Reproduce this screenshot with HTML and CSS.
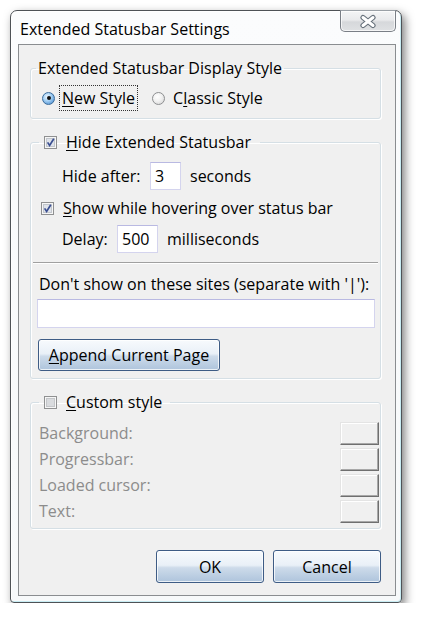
FILE: index.html
```html
<!DOCTYPE html>
<html>
<head>
<meta charset="utf-8">
<link rel="stylesheet" href="styles.css">
</head>
<body>
<div class="window">
  <div class="titlebar">
    <div class="title">Extended Statusbar Settings</div>
    <div class="close">
      <svg width="18" height="15" viewBox="0 0 18 15"><path d="M4 3.5 L14 11.5 M14 3.5 L4 11.5" stroke="#66707a" stroke-width="5.2" stroke-linecap="round" fill="none"/><path d="M4 3.5 L14 11.5 M14 3.5 L4 11.5" stroke="#ffffff" stroke-width="3" stroke-linecap="round" fill="none"/></svg>
    </div>
  </div>
  <div class="client">
    <fieldset class="group g1">
      <legend class="legend">Extended Statusbar Display Style</legend>
      <div class="radio-row">
        <span class="radio on"></span>
        <span class="focus"><u>N</u>ew Style</span>
        <span class="radio off second"></span>
        <span class="rlabel">C<u>l</u>assic Style</span>
      </div>
    </fieldset>

    <fieldset class="group g2">
      <legend class="legend cblegend">
        <svg class="cb" width="13" height="13" viewBox="0 0 13 13"><rect x="0.5" y="0.5" width="12" height="12" fill="#f6f6f6" stroke="#8f9091"/><rect x="2.5" y="2.5" width="8" height="8" fill="#dfe3ea" stroke="#c2c6cc"/><path d="M3.6 6.4 L5.6 9.4 L9.8 2.8" fill="none" stroke="#3b4f91" stroke-width="1.7"/></svg>
        <span><u>H</u>ide Extended Statusbar</span>
      </legend>
      <div class="field-row hide-row">
        <span class="flabel w-hide">Hide after:</span>
        <span class="textbox tb-hide">3</span>
        <span class="unit">seconds</span>
      </div>
      <div class="cb-row">
        <svg class="cb" width="13" height="13" viewBox="0 0 13 13"><rect x="0.5" y="0.5" width="12" height="12" fill="#f6f6f6" stroke="#8f9091"/><rect x="2.5" y="2.5" width="8" height="8" fill="#dfe3ea" stroke="#c2c6cc"/><path d="M3.6 6.4 L5.6 9.4 L9.8 2.8" fill="none" stroke="#3b4f91" stroke-width="1.7"/></svg>
        <span><u>S</u>how while hovering over status bar</span>
      </div>
      <div class="field-row delay-row">
        <span class="flabel w-delay">Delay:</span>
        <span class="textbox tb-delay">500</span>
        <span class="unit">milliseconds</span>
      </div>
      <div class="separator"></div>
      <div class="sites-label">Don't show on these sites (separate with '|'):</div>
      <div class="textbox sites-input"></div>
      <div class="btn append"><span><u>A</u>ppend Current Page</span></div>
    </fieldset>

    <fieldset class="group g3">
      <legend class="legend cblegend g3legend">
        <svg class="cb" width="13" height="13" viewBox="0 0 13 13"><rect x="0.5" y="0.5" width="12" height="12" fill="#f6f6f6" stroke="#8f9091"/><rect x="2.5" y="2.5" width="8" height="8" fill="#d9dbde" stroke="#c4c6c9"/></svg>
        <span><u>C</u>ustom style</span>
      </legend>
      <div class="color-grid">
        <span class="dim">Background:</span><span class="swatch"></span>
        <span class="dim">Progressbar:</span><span class="swatch"></span>
        <span class="dim">Loaded cursor:</span><span class="swatch"></span>
        <span class="dim">Text:</span><span class="swatch"></span>
      </div>
    </fieldset>

    <div class="actions">
      <div class="btn action">OK</div>
      <div class="btn action">Cancel</div>
    </div>
  </div>
</div>
</body>
</html>
```

FILE: styles.css
```css
* { box-sizing: border-box; }

html, body {
  margin: 0;
  background: #ffffff;
}

body {
  padding: 10px 0 0 10px;
  font-family: "Open Sans", "Noto Sans", "DejaVu Sans", sans-serif;
  font-size: 16px;
  color: #000;
}

u { text-decoration: underline; text-underline-offset: 2px; }

.window {
  width: 392px;
  height: 593px;
  border: 1px solid #4e5256;
  border-radius: 7px 7px 4px 4px;
  background: linear-gradient(180deg, #fbfcfd 0%, #f7f9fa 100%);
  box-shadow: 3px 4px 10px rgba(0, 0, 0, 0.5), inset -1px -1px 0 #c8ecf3, inset 1px 1px 0 #ffffff;
  display: flex;
  flex-direction: column;
}

.titlebar {
  height: 33px;
  display: flex;
  align-items: flex-start;
  flex: none;
}

.title {
  padding: 7px 0 0 9px;
  line-height: 22px;
  font-size: 16px;
  text-shadow: 0 0 6px #fff;
}

.close {
  margin: -1px 5px 0 auto;
  width: 56px;
  height: 22px;
  border: 1px solid #7a7f86;
  border-top-color: #9aa0a6;
  border-radius: 0 0 5px 5px;
  background: linear-gradient(180deg, #f4f5f6 0%, #e9eaec 45%, #d6d8db 55%, #dfe1e3 100%);
  box-shadow: inset 0 0 0 1px rgba(255, 255, 255, 0.7);
  display: flex;
  align-items: center;
  justify-content: center;
}

.close svg { display: block; }

.client {
  flex: 1;
  margin: 0 5px 6px 7px;
  border: 1px solid #8a8d90;
  background: #f0f0f0;
  padding: 13px 14px 12px 11px;
  display: flex;
  flex-direction: column;
}

.group {
  margin: 0;
  padding: 0;
  min-width: 0;
  border: 1px solid #d5dfe5;
  border-radius: 3px;
  box-shadow: 1px 1px 0 #ffffff, inset 1px 1px 0 #ffffff;
}

.legend {
  height: 20px;
  line-height: 20px;
  padding: 0 2px;
  margin-left: 5px;
}

.cblegend {
  display: flex;
  align-items: center;
  margin-left: 8px;
  padding: 0 9px 0 5px;
}

.g3legend { padding-right: 8px; }

.cb {
  display: block;
  flex: none;
  margin-right: 9px;
}

/* group 1 */
.radio-row {
  margin: 10px 0 10px 11px;
  height: 20px;
  display: flex;
  align-items: center;
}

.radio {
  width: 13px;
  height: 13px;
  border-radius: 50%;
  flex: none;
  display: flex;
  align-items: center;
  justify-content: center;
}

.radio.on {
  border: 1px solid #3a6c9c;
  background: radial-gradient(circle at 40% 35%, #f2f9ff 0%, #a9d3f5 40%, #5d9ad6 80%, #4a86c4 100%);
}

.radio.on::after {
  content: "";
  width: 4px;
  height: 4px;
  border-radius: 50%;
  background: #111;
}

.radio.off {
  border: 1px solid #8d8f91;
  background: radial-gradient(circle at 40% 35%, #ffffff 0%, #f1f1f1 45%, #cfcfcf 100%);
}

.focus {
  margin-left: 4px;
  padding: 2px 2px;
  line-height: 20px;
  border: 1px dotted #333;
}

.second { margin-left: 14px; }

.rlabel {
  margin-left: 8px;
  line-height: 20px;
}

/* group 2 */
.field-row {
  height: 30px;
  display: flex;
  align-items: center;
  padding-left: 31px;
}

.hide-row { margin-top: 9px; }
.delay-row { margin-top: 6px; }

.w-hide { width: 88px; flex: none; }
.w-delay { width: 55px; flex: none; }

.textbox {
  background: #ffffff;
  border: 1px solid #d4d4ee;
  border-top-color: #b9b9e2;
  height: 28px;
  line-height: 26px;
  padding-left: 4px;
}

.tb-hide { width: 31px; }
.tb-delay { width: 41px; }

.unit { margin-left: 9px; }

.cb-row {
  margin-top: 7px;
  height: 20px;
  line-height: 20px;
  display: flex;
  align-items: center;
  padding-left: 10px;
}

.separator {
  margin: 8px 2px 0 2px;
  height: 2px;
  border-top: 1px solid #a0a0a0;
  border-bottom: 1px solid #ffffff;
}

.sites-label {
  margin-top: 10px;
  padding-left: 8px;
  line-height: 20px;
}

.sites-input {
  margin: 5px 0 0 6px;
  width: 338px;
  height: 29px;
}

.btn {
  border: 1px solid #3e5c85;
  border-radius: 3px;
  background: linear-gradient(180deg, #f7fafd 0%, #e9f0f7 46%, #cddbea 54%, #aec4dc 100%);
  box-shadow: inset 0 0 0 1px rgba(255, 255, 255, 0.75);
  display: flex;
  align-items: center;
  justify-content: center;
}

.append {
  margin: 11px 0 7px 7px;
  width: 182px;
  height: 32px;
}

/* group 3 */
.g2 { margin-top: 13px; }
.g3 { margin-top: 13px; }

.color-grid {
  display: grid;
  grid-template-columns: 1fr 39px;
  grid-auto-rows: 26px;
  align-items: center;
  padding: 8px 1px 4px 8px;
}

.dim {
  color: #8c8c8c;
  line-height: 20px;
}

.swatch {
  height: 23px;
  background: #f0f0f0;
  border: 1px solid;
  border-color: #e4e4e4 #6f6f6f #6f6f6f #e4e4e4;
  box-shadow: inset -1px -1px 0 #a8a8a8, inset 1px 1px 0 #ffffff;
}

/* actions */
.actions {
  margin-top: 21px;
  display: flex;
  justify-content: flex-end;
  gap: 9px;
}

.action {
  width: 108px;
  height: 33px;
}
```
